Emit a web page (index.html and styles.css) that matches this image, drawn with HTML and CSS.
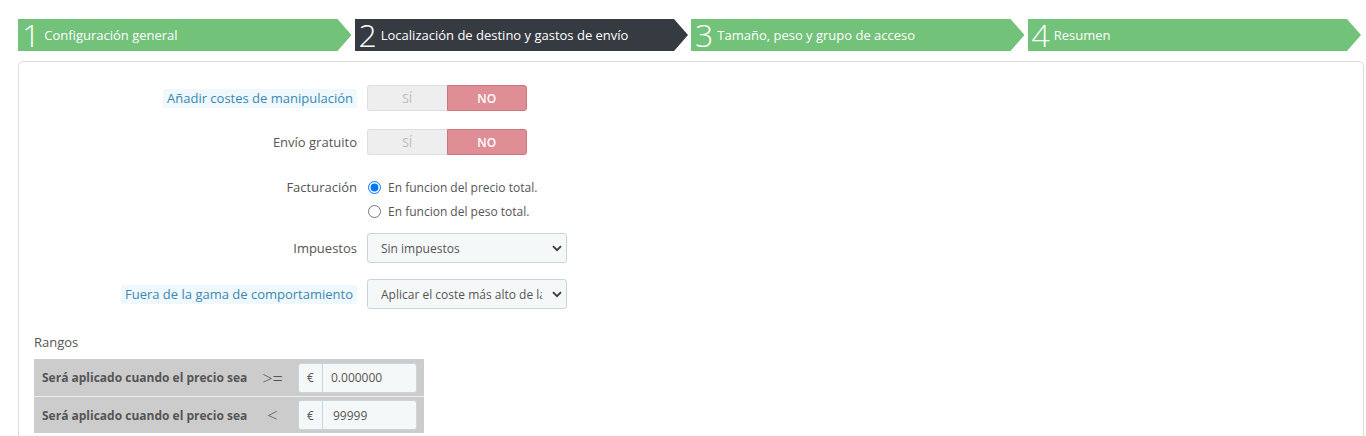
FILE: index.html
```html
<!DOCTYPE html>
<html lang="es">
<head>
<meta charset="utf-8">
<title>Transportista</title>
<link rel="stylesheet" href="styles.css">
</head>
<body>
<div class="page">
  <div class="steps">
    <div class="step done"><span class="num">1</span><span class="txt">Configuración general</span></div>
    <div class="step current"><span class="num">2</span><span class="txt">Localización de destino y gastos de envío</span></div>
    <div class="step"><span class="num">3</span><span class="txt">Tamaño, peso y grupo de acceso</span></div>
    <div class="step"><span class="num">4</span><span class="txt">Resumen</span></div>
  </div>

  <div class="panel">
    <div class="form-row r1">
      <div class="form-label"><span class="hint">Añadir costes de manipulación</span></div>
      <div class="switch">
        <span class="sw-yes">SÍ</span>
        <span class="sw-no">NO</span>
      </div>
    </div>

    <div class="form-row r2">
      <div class="form-label">Envío gratuito</div>
      <div class="switch">
        <span class="sw-yes">SÍ</span>
        <span class="sw-no">NO</span>
      </div>
    </div>

    <div class="form-row r3">
      <div class="form-label top">Facturación</div>
      <div class="radios">
        <label class="radio"><input type="radio" name="billing" checked> En funcion del precio total.</label>
        <label class="radio"><input type="radio" name="billing"> En funcion del peso total.</label>
      </div>
    </div>

    <div class="form-row r4">
      <div class="form-label">Impuestos</div>
      <div class="select">
        <span class="sel-text">Sin impuestos</span>
        <svg class="chev" width="10" height="7" viewBox="0 0 10 7"><path d="M1 1.2 L5 5.2 L9 1.2" fill="none" stroke="#3b3b3b" stroke-width="1.9"/></svg>
      </div>
    </div>

    <div class="form-row r5">
      <div class="form-label"><span class="hint">Fuera de la gama de comportamiento</span></div>
      <div class="select">
        <span class="sel-text">Aplicar el coste más alto de la gama definida</span>
        <svg class="chev" width="10" height="7" viewBox="0 0 10 7"><path d="M1 1.2 L5 5.2 L9 1.2" fill="none" stroke="#3b3b3b" stroke-width="1.9"/></svg>
      </div>
    </div>

    <div class="ranges-title">Rangos</div>
    <div class="ranges">
      <div class="range-row">
        <span class="range-label">Será aplicado cuando el precio sea</span>
        <span class="range-op">&gt;=</span>
        <div class="input-group">
          <span class="addon">€</span>
          <span class="input">0.000000</span>
        </div>
      </div>
      <div class="range-row">
        <span class="range-label">Será aplicado cuando el precio sea</span>
        <span class="range-op lt">&lt;</span>
        <div class="input-group">
          <span class="addon">€</span>
          <span class="input wide">99999</span>
        </div>
      </div>
    </div>
  </div>
</div>
</body>
</html>
```

FILE: styles.css
```css
* { box-sizing: border-box; }

body {
  margin: 0;
  font-family: "Open Sans", "DejaVu Sans", sans-serif;
  font-size: 13px;
  color: #555;
  background: #fff;
}

.page {
  padding: 19px 2px 0 18px;
}

/* wizard steps */
.steps {
  display: grid;
  grid-template-columns: repeat(4, 1fr);
  gap: 3px;
  margin-right: 3px;
}

.step {
  height: 32px;
  display: flex;
  align-items: center;
  gap: 4px;
  padding-left: 4px;
  background: #72c279;
  color: #fff;
  clip-path: polygon(0 0, calc(100% - 14px) 0, 100% 50%, calc(100% - 14px) 100%, 0 100%);
  white-space: nowrap;
}

.step.current { background: #363a41; }

.step .num {
  font-size: 32px;
  font-weight: 300;
  line-height: 32px;
}

.step .txt {
  font-size: 13px;
  line-height: 18px;
}

/* panel */
.panel {
  margin-top: 10px;
  border: 1px solid #dcdcdc;
  border-radius: 5px;
  padding: 23px 15px 20px 15px;
  min-height: 400px;
}

.form-row {
  display: flex;
  align-items: center;
  gap: 10px;
}

.form-row.r2 { margin-top: 18px; }
.form-row.r3 { margin-top: 18px; align-items: flex-start; padding-top: 2px; }
.form-row.r4 { margin-top: 10px; }
.form-row.r5 { margin-top: 16px; }

.form-label {
  width: 323px;
  text-align: right;
  line-height: 19px;
}

.form-label.top { line-height: 24px; }

.hint {
  display: inline-block;
  background: #eff8fc;
  color: #3a88b2;
  padding: 0 4px;
  border-radius: 2px;
  line-height: 19px;
}

/* switch */
.switch {
  display: flex;
  width: 160px;
  height: 26px;
  font-size: 12px;
}

.switch span {
  flex: 1;
  display: flex;
  align-items: center;
  justify-content: center;
}

.sw-yes {
  background: #eeeeee;
  border: 1px solid #dedede;
  border-right: none;
  border-radius: 3px 0 0 3px;
  color: #bbbbbb;
}

.sw-no {
  background: #e08e95;
  border: 1px solid #d0747c;
  border-radius: 0 3px 3px 0;
  color: #fff;
  font-weight: 600;
}

/* radios */
.radios {
  display: flex;
  flex-direction: column;
}

.radio {
  display: flex;
  align-items: center;
  height: 24px;
  font-size: 12px;
}

.radio input {
  margin: 0 7px 0 1px;
  width: 13px;
  height: 13px;
}

/* select */
.select {
  width: 200px;
  height: 30px;
  display: flex;
  align-items: center;
  background: #f5f8f9;
  border: 1px solid #c7d6db;
  border-radius: 3px;
  padding: 0 4px 0 13px;
  font-size: 12px;
  color: #555;
}

.sel-text {
  flex: 1;
  overflow: hidden;
  white-space: nowrap;
  margin-right: 10px;
}

.chev { flex: none; }

/* ranges */
.ranges-title {
  margin-top: 24px;
  line-height: 18px;
  font-size: 13px;
  color: #555;
}

.ranges {
  margin-top: 8px;
  width: 390px;
}

.range-row {
  display: flex;
  align-items: center;
  height: 37px;
  background: #cccccc;
  padding: 0 7px 0 8px;
}

.range-row + .range-row {
  border-top: 1px solid #eeeeee;
  height: 37px;
}

.range-label {
  font-size: 12px;
  font-weight: 700;
  color: #555;
  width: 205px;
  white-space: nowrap;
}

.range-op {
  width: 51px;
  font-size: 18px;
  font-weight: 300;
  color: #555;
  text-align: center;
}

.input-group {
  display: flex;
  height: 30px;
  width: 119px;
  border: 1px solid #c7d6db;
  border-radius: 3px;
  background: #f5f8f9;
  font-size: 12px;
  color: #555;
}

.addon {
  width: 24px;
  display: flex;
  align-items: center;
  justify-content: center;
  border-right: 1px solid #c7d6db;
}

.input {
  flex: 1;
  display: flex;
  align-items: center;
  padding-left: 8px;
}

.input.wide { padding-left: 10px; }
```
